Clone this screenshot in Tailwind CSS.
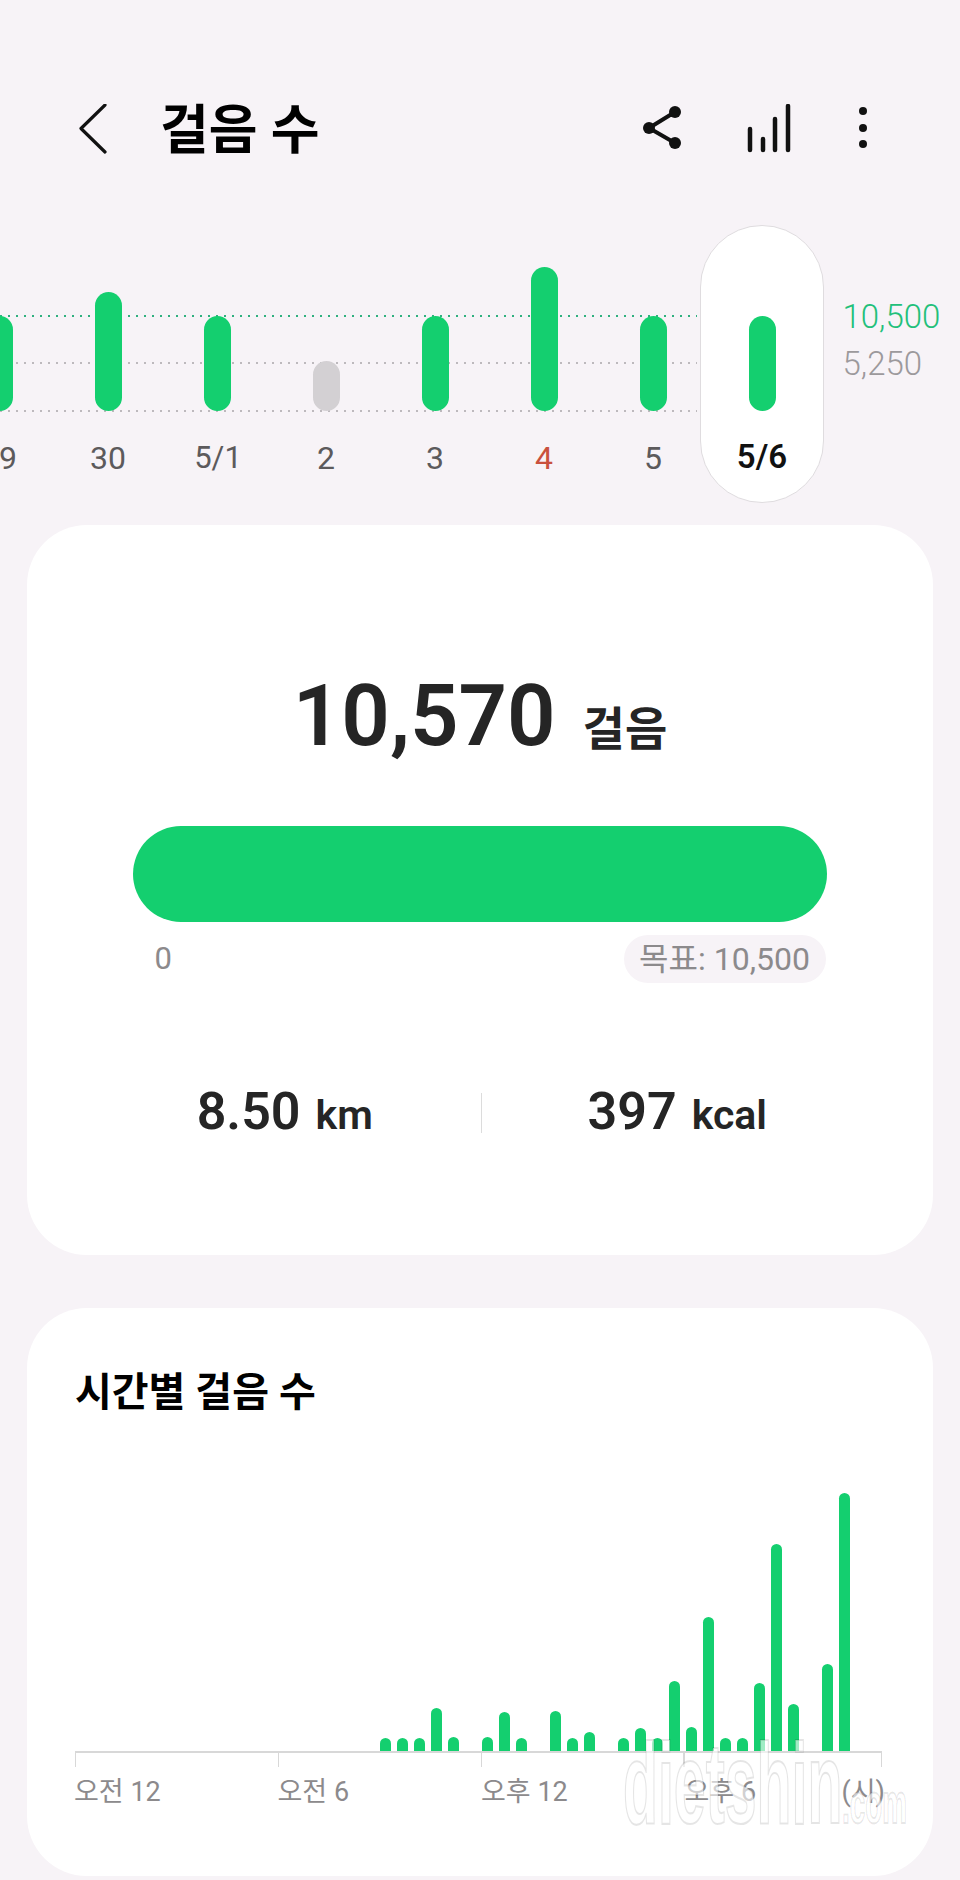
<!DOCTYPE html>
<html lang="ko">
<head>
  <meta charset="UTF-8" />
  <meta name="viewport" content="width=device-width, initial-scale=1.0"/>
  <title>걸음 수</title>
  <script src="https://cdn.jsdelivr.net/npm/@tailwindcss/browser@4"></script>
</head>
<body class="bg-[#f7f3f7] font-['Roboto','Noto_Sans_CJK_KR',sans-serif]">
  <div class="w-[960px] h-[1880px] overflow-hidden">

    <!-- header -->
    <header class="h-[225px] flex pt-[104px] pl-[79px] pr-[89px] items-start">
      <svg class="w-[28px] h-[50px]" viewBox="0 0 28 50" fill="none" stroke="#111" stroke-width="3.2" stroke-linecap="round" stroke-linejoin="round"><path d="M26 1 2 24.500 26 48"/></svg>
      <h1 class="ml-[53px] mt-[-5px] text-[53px] leading-[64px] font-bold text-black">걸음 수</h1>
      <div class="ml-auto flex gap-[62px]">
        <svg class="w-[44px] h-[50px]" viewBox="0 0 44 50" fill="#111"><path d="M10 24 36 8M10 24l26 15" fill="none" stroke="#111" stroke-width="4"/><circle cx="10" cy="24" r="6"/><circle cx="36" cy="8" r="6"/><circle cx="36" cy="39" r="6"/></svg>
        <svg class="w-[48px] h-[50px]" viewBox="0 0 48 50" fill="none" stroke="#111" stroke-width="4.500" stroke-linecap="round"><path d="M5 25V46M18 35V46M30 15V46M43 2V46"/></svg>
        <svg class="w-[16px] h-[50px]" viewBox="0 0 16 50" fill="#111"><circle cx="8" cy="7" r="4"/><circle cx="8" cy="24" r="4"/><circle cx="8" cy="40" r="4"/></svg>
      </div>
    </header>

    <!-- daily chart -->
    <section class="relative h-[278px] flex ml-[-55.5px]">
      <div class="absolute left-[55.5px] top-[90px] w-[697px] h-[2px] bg-[repeating-linear-gradient(90deg,#2fb07f_0_2px,transparent_2px_8px)]"></div>
      <div class="absolute left-[55.5px] top-[137px] w-[697px] h-[2px] bg-[repeating-linear-gradient(90deg,#bdb9bd_0_2px,transparent_2px_8px)]"></div>
      <div class="absolute left-[55.5px] top-[185px] w-[697px] h-[2px] bg-[repeating-linear-gradient(90deg,#bdb9bd_0_2px,transparent_2px_8px)]"></div>
      <div class="absolute left-[755.5px] top-0 w-[124px] h-[278px] rounded-full bg-white border border-[#dfdcdf]"></div>

      <div class="relative w-[109px] flex flex-col items-center text-[32px] leading-[40px] text-[#5c5a5c]">
        <div class="h-[186px] flex items-end"><div class="w-[27px] h-[95px] rounded-full bg-[#14cf6f]"></div></div>
        <span class="mt-[27px]">29</span>
      </div>
      <div class="relative w-[109px] flex flex-col items-center text-[32px] leading-[40px] text-[#5c5a5c]">
        <div class="h-[186px] flex items-end"><div class="w-[27px] h-[119px] rounded-full bg-[#14cf6f]"></div></div>
        <span class="mt-[27px]">30</span>
      </div>
      <div class="relative w-[109px] flex flex-col items-center text-[31px] leading-[40px] text-[#5c5a5c]">
        <div class="h-[186px] flex items-end"><div class="w-[27px] h-[95px] rounded-full bg-[#14cf6f]"></div></div>
        <span class="mt-[27px] ml-[2px]">5/1</span>
      </div>
      <div class="relative w-[109px] flex flex-col items-center text-[32px] leading-[40px] text-[#5c5a5c]">
        <div class="h-[186px] flex items-end"><div class="w-[27px] h-[50px] rounded-full bg-[#d3d0d3]"></div></div>
        <span class="mt-[27px]">2</span>
      </div>
      <div class="relative w-[109px] flex flex-col items-center text-[32px] leading-[40px] text-[#5c5a5c]">
        <div class="h-[186px] flex items-end"><div class="w-[27px] h-[95px] rounded-full bg-[#14cf6f]"></div></div>
        <span class="mt-[27px]">3</span>
      </div>
      <div class="relative w-[109px] flex flex-col items-center text-[32px] leading-[40px] text-[#c9503d]">
        <div class="h-[186px] flex items-end"><div class="w-[27px] h-[144px] rounded-full bg-[#14cf6f]"></div></div>
        <span class="mt-[27px]">4</span>
      </div>
      <div class="relative w-[109px] flex flex-col items-center text-[32px] leading-[40px] text-[#5c5a5c]">
        <div class="h-[186px] flex items-end"><div class="w-[27px] h-[95px] rounded-full bg-[#14cf6f]"></div></div>
        <span class="mt-[27px]">5</span>
      </div>
      <div class="relative w-[109px] flex flex-col items-center text-[33px] leading-[40px] font-semibold text-[#111]">
        <div class="h-[186px] flex items-end"><div class="w-[27px] h-[95px] rounded-full bg-[#14cf6f]"></div></div>
        <span class="mt-[26px]">5/6</span>
      </div>

      <div class="ml-[26px] pt-[72px] flex flex-col gap-[7px] text-[33px] leading-[40px] font-light">
        <span class="text-[#22c07a]">10,500</span>
        <span class="text-[#9c999c]">5,250</span>
      </div>
    </section>

    <!-- today's total -->
    <section class="relative mt-[22px] mx-[27px] w-[906px] h-[730px] rounded-[60px] bg-white pt-[141px]">
      <div class="h-[100px] flex items-baseline justify-center gap-[27px] leading-[100px] text-[#252525]">
        <span class="text-[85px] font-semibold">10,570</span>
        <span class="text-[46px] font-semibold">걸음</span>
      </div>
      <div class="ml-[105.5px] mt-[60px] w-[694px]">
        <div class="h-[96px] rounded-full bg-[#14cf6f]"></div>
        <div class="mt-[13px] pl-[22px] pr-[1px] flex justify-between items-center text-[31px] text-[#8c8a8c]">
          <span>0</span>
          <span class="w-[202px] h-[48px] rounded-full bg-[#f7f3f7] flex items-center justify-center text-[32px]">목표: 10,500</span>
        </div>
      </div>
      <div class="ml-[62px] mt-[100px] h-[60px] w-[784px] flex items-center text-[#252525]">
        <div class="flex-1 flex items-baseline justify-center gap-[15px] font-semibold">
          <span class="text-[52px] leading-[60px]">8.50</span>
          <span class="text-[41px] leading-[60px]">km</span>
        </div>
        <div class="w-px h-[40px] bg-[#dcdcdc]"></div>
        <div class="flex-1 flex items-baseline justify-center gap-[15px] font-semibold">
          <span class="text-[52px] leading-[60px]">397</span>
          <span class="text-[41px] leading-[60px]">kcal</span>
        </div>
      </div>
    </section>

    <!-- hourly chart -->
    <section class="relative mt-[53px] mx-[27px] w-[906px] h-[568px] rounded-[60px] bg-white pt-[55px] pl-[48px]">
      <h2 class="text-[40px] leading-[60px] font-semibold text-black">시간별 걸음 수</h2>
      <div class="h-[328px] pl-[305px] flex items-end gap-[6px]">
        <div class="w-[11px] h-[13px] rounded-t-full bg-[#14cf6f]"></div>
        <div class="w-[11px] h-[13px] rounded-t-full bg-[#14cf6f]"></div>
        <div class="w-[11px] h-[13px] rounded-t-full bg-[#14cf6f]"></div>
        <div class="w-[11px] h-[43px] rounded-t-full bg-[#14cf6f]"></div>
        <div class="w-[11px] h-[14px] rounded-t-full bg-[#14cf6f]"></div>
        <div class="w-[11px]"></div>
        <div class="w-[11px] h-[14px] rounded-t-full bg-[#14cf6f]"></div>
        <div class="w-[11px] h-[39px] rounded-t-full bg-[#14cf6f]"></div>
        <div class="w-[11px] h-[13px] rounded-t-full bg-[#14cf6f]"></div>
        <div class="w-[11px]"></div>
        <div class="w-[11px] h-[40px] rounded-t-full bg-[#14cf6f]"></div>
        <div class="w-[11px] h-[13px] rounded-t-full bg-[#14cf6f]"></div>
        <div class="w-[11px] h-[19px] rounded-t-full bg-[#14cf6f]"></div>
        <div class="w-[11px]"></div>
        <div class="w-[11px] h-[13px] rounded-t-full bg-[#14cf6f]"></div>
        <div class="w-[11px] h-[23px] rounded-t-full bg-[#14cf6f]"></div>
        <div class="w-[11px] h-[13px] rounded-t-full bg-[#14cf6f]"></div>
        <div class="w-[11px] h-[70px] rounded-t-full bg-[#14cf6f]"></div>
        <div class="w-[11px] h-[24px] rounded-t-full bg-[#14cf6f]"></div>
        <div class="w-[11px] h-[134px] rounded-t-full bg-[#14cf6f]"></div>
        <div class="w-[11px] h-[13px] rounded-t-full bg-[#14cf6f]"></div>
        <div class="w-[11px] h-[13px] rounded-t-full bg-[#14cf6f]"></div>
        <div class="w-[11px] h-[68px] rounded-t-full bg-[#14cf6f]"></div>
        <div class="w-[11px] h-[207px] rounded-t-full bg-[#14cf6f]"></div>
        <div class="w-[11px] h-[47px] rounded-t-full bg-[#14cf6f]"></div>
        <div class="w-[11px]"></div>
        <div class="w-[11px] h-[87px] rounded-t-full bg-[#14cf6f]"></div>
        <div class="w-[11px] h-[258px] rounded-t-full bg-[#14cf6f]"></div>
      </div>
      <div class="w-[807px] h-[16px] border-t-2 border-[#d8d8d8] flex gap-[201.500px]">
        <div class="w-[2px] bg-[#d8d8d8]"></div>
        <div class="w-[2px] bg-[#d8d8d8]"></div>
        <div class="w-[2px] bg-[#d8d8d8]"></div>
        <div class="w-[2px] bg-[#d8d8d8]"></div>
        <div class="w-[2px] bg-[#d8d8d8] ml-[-5.500px]"></div>
      </div>
      <div class="mt-[5px] ml-[-1px] w-[811px] flex text-[27px] leading-[40px] text-[#8c8a8c]">
        <span class="w-[203.500px]">오전 12</span>
        <span class="w-[203.500px]">오전 6</span>
        <span class="w-[203.500px]">오후 12</span>
        <span>오후 6</span>
        <span class="ml-auto">(시)</span>
      </div>

      <!-- watermark over the chart -->
      <div class="absolute left-[596px] top-[430px] h-[90px] w-[300px] font-['Liberation_Sans',sans-serif] font-bold text-white/60 [-webkit-text-stroke:2px_#0000001a]">
        <span class="absolute left-0 top-0 text-[105px] leading-[90px] origin-left scale-x-[0.545] scale-y-[1.1]">dietshin</span>
        <span class="absolute left-[219px] top-[36px] text-[58px] leading-[58px] origin-left scale-x-[0.48]">.com</span>
      </div>
    </section>
  </div>
</body>
</html>
